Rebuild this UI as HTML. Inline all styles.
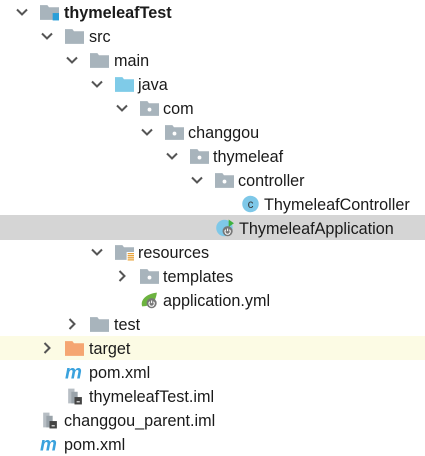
<!DOCTYPE html>
<html><head><meta charset="utf-8"><style>
body{margin:0;width:425px;height:451px;background:#fff;overflow:hidden;position:relative;font-family:"Liberation Sans","Noto Sans CJK SC",sans-serif;font-size:16.2px;color:#1a1a1a}
.r{position:absolute;left:0;width:425px;height:24px}
.t{position:absolute;top:4px;line-height:18px;white-space:nowrap}
.c{position:absolute;top:6px;width:12px;height:12px}
.i{position:absolute;top:3px;width:19px;height:18px}
.i use,.c use{width:100%;height:100%}
</style></head><body>
<svg width="0" height="0" style="position:absolute">
<defs>
<symbol id="chd" viewBox="0 0 12 12"><path d="M1 3.5L6 8.5L11 3.5" fill="none" stroke="#555" stroke-width="2"/></symbol>
<symbol id="chr" viewBox="0 0 12 12"><path d="M3.5 1L8.5 6L3.5 11" fill="none" stroke="#555" stroke-width="2"/></symbol>
<symbol id="fg" viewBox="0 0 18 16"><path d="M0 1.5h7l1.5 2H18v12H0z" fill="#a8b4bc"/></symbol>
<symbol id="fb" viewBox="0 0 18 16"><path d="M0 1.5h7l1.5 2H18v12H0z" fill="#7fcbe8"/></symbol>
<symbol id="fo" viewBox="0 0 18 16"><path d="M0 1.5h7l1.5 2H18v12H0z" fill="#f5a672"/></symbol>
<symbol id="fp" viewBox="0 0 18 16"><path d="M0 1.5h7l1.5 2H18v12H0z" fill="#a8b4bc"/><circle cx="9" cy="9.5" r="1.8" fill="#fff"/></symbol>
<symbol id="fm" viewBox="0 0 18 16"><path d="M0 1.5h7l1.5 2H18v12H0z" fill="#a8b4bc"/><rect x="12" y="9" width="6" height="7" fill="#2a9fd8"/></symbol>
<symbol id="fr" viewBox="0 0 18 16"><path d="M0 1.5h7l1.5 2H18v12H0z" fill="#a8b4bc"/><rect x="11" y="8" width="7" height="8" fill="#fff"/><path d="M12 9.5h6M12 11.5h6M12 13.5h6M12 15.5h6" stroke="#e8a33a" stroke-width="1.2"/></symbol>
<symbol id="cl" viewBox="0 0 18 16"><circle cx="9" cy="8" r="7.8" fill="#7ec8e8"/><text x="9" y="12" font-size="11" text-anchor="middle" fill="#333" font-family="Liberation Sans">c</text></symbol>
<symbol id="ap" viewBox="0 0 18 16"><circle cx="8" cy="8" r="7.8" fill="#7ec8e8"/><path d="M12 0l5 3.5-5 3.5z" fill="#3fb13f"/><circle cx="11" cy="11" r="4.8" fill="#777"/><path d="M11 8.5v2.5M9.3 9.6a2.5 2.5 0 1 0 3.4 0" fill="none" stroke="#fff" stroke-width="1"/></symbol>
<symbol id="yml" viewBox="0 0 18 16"><path d="M2 14C0 8 6 2 16 1c-1 8-5 13-14 13z" fill="#6cb33f"/><circle cx="11" cy="11" r="4.8" fill="#777"/><path d="M11 8.5v2.5M9.3 9.6a2.5 2.5 0 1 0 3.4 0" fill="none" stroke="#fff" stroke-width="1"/></symbol>
<symbol id="pm" viewBox="0 0 18 16"><text x="0" y="14" font-size="18" font-style="italic" font-weight="bold" fill="#3aa2dd" font-family="Liberation Sans">m</text></symbol>
<symbol id="im" viewBox="0 0 18 16"><path d="M3 1h6v14H3z" fill="#b7bec4"/><path d="M6 4h6v11H6z" fill="#9aa3aa"/><rect x="9" y="9" width="7" height="7" fill="#444"/><rect x="11" y="13" width="3" height="1" fill="#fff"/></symbol>
</defs></svg>

<div class="r" style="top:215px;height:25px;background:#d5d5d5"></div>
<div class="r" style="top:336px;background:#fcfbe4"></div>

<div class="r" style="top:0"><svg class="c" style="left:16px"><use href="#chd"/></svg><svg class="i" style="left:40px"><use href="#fm"/></svg><span class="t" style="left:64px;font-weight:bold">thymeleafTest</span></div>
<div class="r" style="top:24px"><svg class="c" style="left:41px"><use href="#chd"/></svg><svg class="i" style="left:65px"><use href="#fg"/></svg><span class="t" style="left:89px">src</span></div>
<div class="r" style="top:48px"><svg class="c" style="left:66px"><use href="#chd"/></svg><svg class="i" style="left:90px"><use href="#fg"/></svg><span class="t" style="left:114px">main</span></div>
<div class="r" style="top:72px"><svg class="c" style="left:91px"><use href="#chd"/></svg><svg class="i" style="left:115px"><use href="#fb"/></svg><span class="t" style="left:138px">java</span></div>
<div class="r" style="top:96px"><svg class="c" style="left:116px"><use href="#chd"/></svg><svg class="i" style="left:140px"><use href="#fp"/></svg><span class="t" style="left:163px">com</span></div>
<div class="r" style="top:120px"><svg class="c" style="left:141px"><use href="#chd"/></svg><svg class="i" style="left:165px"><use href="#fp"/></svg><span class="t" style="left:188px">changgou</span></div>
<div class="r" style="top:144px"><svg class="c" style="left:166px"><use href="#chd"/></svg><svg class="i" style="left:190px"><use href="#fp"/></svg><span class="t" style="left:213px">thymeleaf</span></div>
<div class="r" style="top:168px"><svg class="c" style="left:191px"><use href="#chd"/></svg><svg class="i" style="left:215px"><use href="#fp"/></svg><span class="t" style="left:238px">controller</span></div>
<div class="r" style="top:192px"><svg class="i" style="left:241px"><use href="#cl"/></svg><span class="t" style="left:264px">ThymeleafController</span></div>
<div class="r" style="top:216px"><svg class="i" style="left:216px"><use href="#ap"/></svg><span class="t" style="left:239px">ThymeleafApplication</span></div>
<div class="r" style="top:240px"><svg class="c" style="left:91px"><use href="#chd"/></svg><svg class="i" style="left:115px"><use href="#fr"/></svg><span class="t" style="left:138px">resources</span></div>
<div class="r" style="top:264px"><svg class="c" style="left:116px"><use href="#chr"/></svg><svg class="i" style="left:140px"><use href="#fp"/></svg><span class="t" style="left:163px">templates</span></div>
<div class="r" style="top:288px"><svg class="i" style="left:140px"><use href="#yml"/></svg><span class="t" style="left:163px">application.yml</span></div>
<div class="r" style="top:312px"><svg class="c" style="left:66px"><use href="#chr"/></svg><svg class="i" style="left:90px"><use href="#fg"/></svg><span class="t" style="left:114px">test</span></div>
<div class="r" style="top:336px"><svg class="c" style="left:41px"><use href="#chr"/></svg><svg class="i" style="left:65px"><use href="#fo"/></svg><span class="t" style="left:89px">target</span></div>
<div class="r" style="top:360px"><svg class="i" style="left:65px"><use href="#pm"/></svg><span class="t" style="left:89px">pom.xml</span></div>
<div class="r" style="top:384px"><svg class="i" style="left:65px"><use href="#im"/></svg><span class="t" style="left:89px">thymeleafTest.iml</span></div>
<div class="r" style="top:408px"><svg class="i" style="left:40px"><use href="#im"/></svg><span class="t" style="left:64px">changgou_parent.iml</span></div>
<div class="r" style="top:432px"><svg class="i" style="left:40px"><use href="#pm"/></svg><span class="t" style="left:64px">pom.xml</span></div>
</body></html>
